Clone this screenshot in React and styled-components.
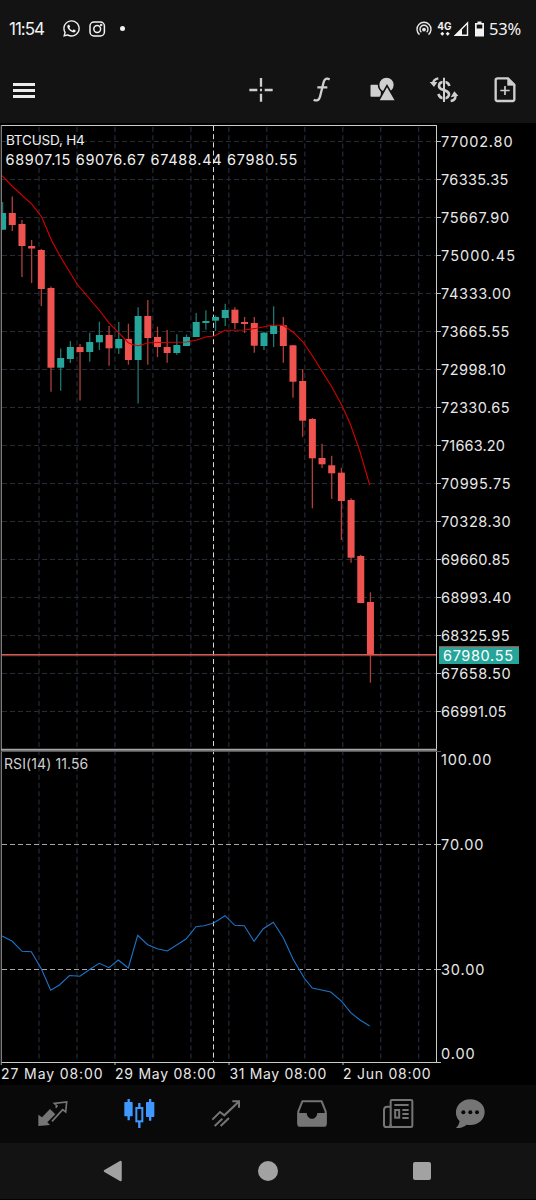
import React from "react";
import styled, { createGlobalStyle } from "styled-components";
import { FaWhatsapp } from "react-icons/fa";

const GlobalStyle = createGlobalStyle`
  body {
    margin: 0;
    background-color: #000000;
  }
`;

const Screen = styled.div`
  width: 536px;
  height: 1200px;
  display: flex;
  flex-direction: column;
  overflow: hidden;
  background-color: #000000;
  color: #e6e6e6;
  font-family: Inter, "Liberation Sans", sans-serif;
`;

const StatusBar = styled.div`
  height: 57px;
  padding: 0 14px 0 9px;
  box-sizing: border-box;
  display: flex;
  align-items: center;
  justify-content: space-between;
  background-color: #131313;
  color: #f2f2f2;
`;

const StatusGroup = styled.div`
  display: flex;
  align-items: center;
`;

const Clock = styled.span`
  width: 53px;
  font-size: 17px;
  font-weight: 400;
  letter-spacing: -1px;
`;

const InstaIcon = styled.svg`
  margin-left: 7px;
`;

const Dot = styled.span`
  width: 5px;
  height: 5px;
  margin-left: 14px;
  border-radius: 50%;
  background-color: #f2f2f2;
`;

const Network = styled.div`
  width: 15px;
  margin-left: 5px;
  display: flex;
  flex-direction: column;
  align-items: center;
  font-size: 10px;
  line-height: 10px;
  font-weight: 700;
`;

const SignalIcon = styled.svg`
  margin-left: 1px;
`;

const BatteryIcon = styled.svg`
  margin: 0 5px 0 6px;
`;

const Battery = styled.span`
  width: 33px;
  font-family: "Noto Sans", sans-serif;
  font-size: 16.5px;
  letter-spacing: -0.2px;
  white-space: nowrap;
`;

const Toolbar = styled.div`
  height: 66px;
  padding: 0 1px 0 13px;
  display: flex;
  align-items: center;
  justify-content: space-between;
  background-color: #131313;
`;

const MenuButton = styled.div`
  width: 22px;
  display: flex;
  flex-direction: column;
  gap: 3px;
`;

const MenuLine = styled.span`
  height: 3px;
  background-color: #ececec;
`;

const Tools = styled.div`
  display: flex;
`;

const ToolButton = styled.div`
  width: 61px;
  height: 32px;
  display: flex;
  align-items: center;
  justify-content: center;
  color: #cfcfcf;
`;

const Chart = styled.div`
  height: 962px;
  background-color: #000000;
`;

const ChartRow = styled.div`
  display: flex;
  height: 942px;
`;

const Plot = styled.div`
  position: relative;
  width: 441px;
  flex: none;
`;

const PlotLabel = styled.div`
  position: absolute;
  left: ${(p) => p.$left}px;
  top: ${(p) => p.$top}px;
  color: ${(p) => p.$color || "#f0f0f0"};
  font-size: ${(p) => p.$size || 14}px;
  line-height: 20px;
  letter-spacing: ${(p) => p.$spacing || 0}px;
  white-space: nowrap;
`;

const Axis = styled.div`
  position: relative;
  flex: 1;
  font-size: 14.5px;
  color: #e8e8e8;
`;

const PriceList = styled.div`
  height: 627px;
  display: flex;
  flex-direction: column;
`;

const Price = styled.div`
  height: 38px;
  line-height: 38px;
  letter-spacing: ${(p) => p.$spacing}px;
`;

const RsiList = styled.div`
  display: grid;
  grid-template-rows: 85px 125px 84px 20px;
  line-height: 20px;
  letter-spacing: 0.9px;
`;

const PriceTag = styled.div`
  position: absolute;
  left: -2px;
  top: 523px;
  width: 80px;
  height: 18px;
  padding-left: 4px;
  box-sizing: border-box;
  line-height: 18px;
  letter-spacing: 0.65px;
  background-color: #26a69a;
  border-top: 1px solid #b0493f;
  color: #ffffff;
`;

const TimeAxis = styled.div`
  display: grid;
  grid-template-columns: 114px 114.5px 113.5px 110px;
  padding-left: 1px;
  font-size: 14px;
  line-height: 18px;
  color: #e8e8e8;
`;

const TimeLabel = styled.span`
  letter-spacing: ${(p) => p.$spacing}px;
  white-space: nowrap;
`;

const TabBar = styled.div`
  height: 58px;
  padding-left: 10px;
  display: grid;
  grid-template-columns: 86px 86px 87px 86px 86px 58px;
  align-items: center;
  justify-items: center;
  background-color: #090909;
`;

const TabIcon = styled.svg`
  color: ${(p) => (p.$active ? "#3f98ff" : "#757575")};
`;

const NavBar = styled.div`
  height: 56px;
  padding-left: 35px;
  display: grid;
  grid-template-columns: 155px 155px 154px;
  align-items: center;
  justify-items: center;
  background-color: #131313;
`;

const HomeButton = styled.span`
  width: 20px;
  height: 20px;
  border-radius: 50%;
  background-color: #a2a2a2;
`;

const RecentButton = styled.span`
  width: 18px;
  height: 18px;
  border-radius: 2px;
  background-color: #a2a2a2;
`;

const prices = [
  ["77002.80", 0.85],
  ["76335.35", 0.35],
  ["75667.90", 0.65],
  ["75000.45", 1.1],
  ["74333.00", 0.65],
  ["73665.55", 0.5],
  ["72998.10", 0.45],
  ["72330.65", 0.45],
  ["71663.20", 0.15],
  ["70995.75", 0.75],
  ["70328.30", 0.6],
  ["69660.85", 0.35],
  ["68993.40", 0.4],
  ["68325.95", 0.35],
  ["67658.50", 0.6],
  ["66991.05", 0.25],
];

const times = [
  ["27 May 08:00", 0.9],
  ["29 May 08:00", 0.75],
  ["31 May 08:00", 0.65],
  ["2 Jun 08:00", 0.75],
];

// [direction, high, body top, body bottom, low]
const candles = [
  ["up", 202, 213, 229.7, 230],
  ["down", 196.5, 213, 225, 231],
  ["down", 220, 224, 246, 277],
  ["down", 240, 246, 248.5, 283],
  ["down", 249, 250, 289, 306],
  ["down", 286.5, 288, 367.7, 391.7],
  ["up", 348.5, 358, 367.7, 390.7],
  ["up", 341, 347, 359, 363],
  ["down", 344, 347, 352, 400.5],
  ["up", 332.7, 342, 352, 361.7],
  ["up", 321.7, 335, 342.3, 350],
  ["down", 326, 335, 348.3, 365.7],
  ["up", 322, 339, 348.3, 354],
  ["down", 323.7, 339, 360, 364.7],
  ["up", 307.3, 316, 360, 403.5],
  ["down", 300, 316, 338, 364.7],
  ["down", 326.7, 337, 347, 357],
  ["down", 330, 347, 353, 362.7],
  ["up", 334.3, 345, 353, 354.7],
  ["up", 334.5, 337, 346, 346],
  ["up", 313, 322, 337, 337],
  ["up", 310.3, 321, 323, 329.7],
  ["up", 315.5, 317, 320.7, 331],
  ["up", 303.7, 310, 318, 326],
  ["down", 307.3, 309.7, 323, 329],
  ["down", 317, 322, 324, 333],
  ["down", 317, 323, 345.7, 352.7],
  ["up", 331.7, 332.7, 346, 350],
  ["up", 306.3, 325.7, 334, 347],
  ["down", 317, 325.3, 346, 362.7],
  ["down", 345, 345.3, 381.7, 397.7],
  ["down", 369, 381, 420.7, 436.7],
  ["down", 418, 419, 458.3, 508.3],
  ["down", 443.7, 458, 464.3, 468],
  ["down", 455.7, 465.3, 473.3, 499],
  ["down", 467.7, 472.7, 501, 540],
  ["down", 498.3, 500, 557.7, 562.7],
  ["down", 554.7, 556, 603, 603.3],
  ["down", 592.3, 602, 655.3, 682.7],
];

const average =
  "2,175.7 13,187 32,204.3 41.7,217 51.7,240.7 60.7,257.3 77,284 100,311 109.3,323.3 119.3,333.3 128.3,342.7 133,344.7 138.3,345.7 148.3,342.7 186.7,342 196.7,340 206.7,336.7 214.3,336 225,330.3 244.3,330 256.7,328.3 271.7,325.3 282.7,325.3 293.3,332.3 303.3,342.3 313.3,357.3 331.7,386.7 341.7,405 350,423.3 360,451.7 369.7,485";

const rsi =
  "2,936 12.3,941.3 22,951.3 31.3,951.7 41.3,968.7 50.7,990.3 59.5,985 69.5,975.5 80,976.3 90,969.3 99.3,963.3 109,967.7 118.3,960 128.3,968 137.7,935.3 147.7,944.7 157.3,948.7 167.3,951 186,939 196,926.7 204,925.7 213.7,923 225,915.7 234.7,925.3 244.3,925.7 254,941.3 263.3,928.7 273.3,922.3 283.3,937.7 293,959 304.3,978.3 312.3,988 330.7,992 341.7,1001.3 350.7,1012.7 360,1020 369.7,1026";

const PlotDrawing = () => (
  <svg width="441" height="942" viewBox="0 123 441 942" fill="none">
    {prices.map(([label], i) => (
      <g key={label}>
        <path d={`M2 ${141.5 + i * 38}H436`} stroke="#262b38" strokeDasharray="5 3" />
        <path d={`M437 ${141.5 + i * 38}H441`} stroke="#bcbcbc" />
      </g>
    ))}
    {Array.from({ length: 11 }, (_, i) => (
      <path
        key={i}
        d={`M${39 + i * 37.97} 127V1062`}
        stroke="#262a38"
        strokeWidth="1.2"
        strokeDasharray="5 3.2"
      />
    ))}
    <path d="M213.5 126V1062" stroke="#d8d8d8" strokeDasharray="5 3.2" />
    <path d="M2 844.5H436M2 969.5H436" stroke="#a8a8a8" strokeDasharray="5 3" />
    {candles.map(([dir, high, top, bottom, low], i) => {
      const x = 2.6 + i * 9.68;
      const left = Math.max(1.5, x - 3.5);
      return (
        <g key={i}>
          <path
            d={`M${x} ${high}V${low}`}
            stroke={dir === "up" ? "#1b776f" : "#b03f3c"}
            strokeWidth="1.3"
          />
          <rect
            x={left}
            y={top}
            width={x + 3.5 - left}
            height={bottom - top}
            fill={dir === "up" ? "#26a69a" : "#ef5350"}
          />
        </g>
      );
    })}
    <polyline points={average} stroke="#d80000" strokeWidth="1.1" />
    <polyline points={rsi} stroke="#1c74c8" strokeWidth="1.1" />
    <path d="M1 654.6H436" stroke="#e0524a" strokeWidth="1.2" />
    <path d="M1 655.7H436" stroke="#8d5450" strokeWidth="0.8" />
    <path d="M1 125.5H437M436.5 125V1063M1 1062.5H441" stroke="#c8cbc8" />
    <path d="M1.3 125V1065" stroke="#8a8a8a" strokeWidth="1.2" />
    <path d="M1 749.8H437" stroke="#a5a5a5" strokeWidth="2" />
    <path d="M1 751.5H441" stroke="#555555" />
    <path d="M437 844.5H441M437 969.5H441M115 1063V1065M229 1063V1065M343 1063V1065" stroke="#bcbcbc" />
  </svg>
);

const ToolSvg = ({ children }) => (
  <svg width="30" height="30" viewBox="-45 -45 90 90" fill="none" stroke="currentColor">
    {children}
  </svg>
);

const App = () => {
  return (
    <>
      <GlobalStyle />
      <Screen>
        <StatusBar>
          <StatusGroup>
            <Clock>11:54</Clock>
            <FaWhatsapp size={19} />
            <InstaIcon width="18" height="18" viewBox="0 0 18 18" fill="none" stroke="#f2f2f2" strokeWidth="1.5">
              <rect x="2" y="2" width="14.4" height="14" rx="4" />
              <circle cx="9.2" cy="9" r="3.4" />
              <circle cx="13.2" cy="5" r="0.5" />
            </InstaIcon>
            <Dot />
          </StatusGroup>
          <StatusGroup>
            <svg width="16" height="16" viewBox="0 0 16 16" fill="none" stroke="#e6e6e6" strokeWidth="1.4">
              <path d="M3.5 13.6A7 7 0 1 1 12.5 13.6" />
              <path d="M5.4 11.3A4 4 0 1 1 10.6 11.3" />
              <circle cx="8" cy="8.6" r="1.2" fill="#e6e6e6" />
            </svg>
            <Network>
              4G
              <svg width="10" height="5" viewBox="0 0 10 5" fill="#f2f2f2">
                <path d="M0.3 2.8 2.3 0.8 4.3 2.8 2.3 4.8ZM5.7 2.8 7.7 0.8 9.7 2.8 7.7 4.8Z" />
              </svg>
            </Network>
            <SignalIcon width="16" height="16" viewBox="0 0 16 16">
              <path d="M14.5 2V14.3H2.4Z" fill="none" stroke="#f2f2f2" strokeWidth="1.4" />
              <path d="M1 15 9 7.500V15Z" fill="#f2f2f2" />
            </SignalIcon>
            <BatteryIcon width="9" height="16" viewBox="0 0 9 16">
              <path d="M2.5 0.5H6.5V2H9V15.500H0V2H2.5Z" fill="#f2f2f2" />
              <rect x="1.7" y="3.6" width="5.6" height="3.9" fill="#131313" />
            </BatteryIcon>
            <Battery>53%</Battery>
          </StatusGroup>
        </StatusBar>

        <Toolbar>
          <MenuButton>
            <MenuLine />
            <MenuLine />
            <MenuLine />
          </MenuButton>
          <Tools>
            <ToolButton>
              <ToolSvg>
                <path d="M0-36V-10M0 11V35M-35 0H-11M11 0H35M-3 0H3" strokeWidth="7" />
              </ToolSvg>
            </ToolButton>
            <ToolButton>
              <ToolSvg>
                <path d="M23-32C14-36 8-34 5-24L-6 20C-9 31-16 34-25 29M-14-8H16" strokeWidth="7" />
              </ToolSvg>
            </ToolButton>
            <ToolButton>
              <ToolSvg>
                <g fill="currentColor" stroke="#131313" strokeWidth="5">
                  <rect x="-40" y="-18" width="36" height="41" rx="5" />
                  <circle cx="10.5" cy="-15.5" r="24" />
                  <path d="M12-13-14 33H39Z" />
                </g>
              </ToolSvg>
            </ToolButton>
            <ToolButton>
              <ToolSvg>
                <path
                  d="M16-12C14-21 7-24 0-24-10-24-15-19-15-12-15-3-6-2 0 0 8 3 15 5 15 13 15 20 9 25 0 25-8 25-14 20-17 12"
                  strokeWidth="8"
                />
                <path d="M0-37V-9M0 9V36" stroke="#131313" strokeWidth="9" />
                <path d="M0-37V36" strokeWidth="6" />
                <path d="M-17-35C-27-33-32-28-33-20M20 33C29 32 34 27 35 18" strokeWidth="7" />
                <path d="M-43-24-20-24-30-9ZM20 22 43 17 31 4Z" fill="currentColor" stroke="none" />
              </ToolSvg>
            </ToolButton>
            <ToolButton>
              <ToolSvg>
                <path d="M-22-35H9L28-16V28Q28 33 23 33H-23Q-28 33-28 28V-30Q-28-35-22-35Z" strokeWidth="7" />
                <path d="M8-36V-14H30Z" fill="currentColor" strokeWidth="2" />
                <path d="M0-12V15M-14 1.5H14" strokeWidth="5" />
              </ToolSvg>
            </ToolButton>
          </Tools>
        </Toolbar>

        <Chart>
          <ChartRow>
            <Plot>
              <PlotDrawing />
              <PlotLabel $left={6} $top={7} $size={13.5} $spacing={-0.2}>BTCUSD, H4</PlotLabel>
              <PlotLabel $left={5.5} $top={27} $size={14.5} $spacing={0.7}>
                68907.15 69076.67 67488.44 67980.55
              </PlotLabel>
              <PlotLabel $left={4} $top={631} $spacing={0.1} $color="#cfcfcf">RSI(14) 11.56</PlotLabel>
            </Plot>
            <Axis>
              <PriceList>
                {prices.map(([label, spacing]) => (
                  <Price key={label} $spacing={spacing}>{label}</Price>
                ))}
              </PriceList>
              <RsiList>
                <span>100.00</span>
                <span>70.00</span>
                <span>30.00</span>
                <span>0.00</span>
              </RsiList>
              <PriceTag>67980.55</PriceTag>
            </Axis>
          </ChartRow>
          <TimeAxis>
            {times.map(([label, spacing]) => (
              <TimeLabel key={label} $spacing={spacing}>{label}</TimeLabel>
            ))}
          </TimeAxis>
        </Chart>

        <TabBar>
          <TabIcon width="32" height="32" viewBox="-48 -48 96 96" fill="none" stroke="currentColor" strokeWidth="5">
            <path d="M-44 36V2L-33 10-9-15 7 1-17 25-9 33Z" fill="currentColor" stroke="none" />
            <path d="M8-19 12-24 4-32 41-36 38-6 29-13-3 22" />
          </TabIcon>
          <TabIcon $active width="32" height="32" viewBox="-48 -48 96 96" fill="none" stroke="currentColor" strokeWidth="7">
            <rect x="-44" y="-36" width="25" height="43" rx="2" fill="currentColor" stroke="none" />
            <rect x="21" y="-36" width="25" height="45" rx="2" fill="currentColor" stroke="none" />
            <rect x="-8" y="-18" width="18" height="40" strokeWidth="6" />
            <path d="M-31-45V19M33.500-45V20M1-33V-18M1 22V42" />
          </TabIcon>
          <TabIcon width="32" height="32" viewBox="-48 -48 96 96" fill="none" stroke="currentColor" strokeWidth="6">
            <path d="M-41 17-18-6-5 4 38-37M19-38H39V-19M-34 36-11 14M-16 36 9 12" />
          </TabIcon>
          <TabIcon width="32" height="32" viewBox="-48 -48 96 96" fill="none" stroke="currentColor" strokeWidth="6">
            <path d="M-41 30V-8L-29-38H29L41-8V30" strokeLinejoin="round" />
            <path d="M-44-3H-16C-14 20 14 20 16-3H44V32Q44 38 38 38H-38Q-44 38-44 32Z" fill="currentColor" stroke="none" />
          </TabIcon>
          <TabIcon width="32" height="32" viewBox="-48 -48 96 96" fill="none" stroke="currentColor" strokeWidth="6">
            <rect x="-22" y="-42" width="65" height="81" rx="4" />
            <path d="M-22-22H-32Q-42-22-42-12V32Q-42 39-35 39H-18M-28 39Q-22 39-22 30" />
            <path d="M-11-27H32M13-12H32M13 0H32M13 12H32" />
            <rect x="-8.500" y="-12" width="12" height="23" />
          </TabIcon>
          <TabIcon width="32" height="32" viewBox="-48 -48 96 96" fill="currentColor">
            <path d="M1-44C26-44 44-27 44-6S26 33 1 33Q-5 33-10 32-23 43-42 42-33 35-31 22C-56-3-37-44 1-44Z" />
            <g fill="#090909">
              <circle cx="-20" cy="-5" r="6" />
              <circle cx="1" cy="-5" r="6" />
              <circle cx="21" cy="-5" r="6" />
            </g>
          </TabIcon>
        </TabBar>

        <NavBar>
          <svg width="20" height="22" viewBox="0 0 20 22">
            <path d="M2 11 17.500 2V20Z" fill="#a2a2a2" stroke="#a2a2a2" strokeWidth="2.500" strokeLinejoin="round" />
          </svg>
          <HomeButton />
          <RecentButton />
        </NavBar>
      </Screen>
    </>
  );
};

export default App;
